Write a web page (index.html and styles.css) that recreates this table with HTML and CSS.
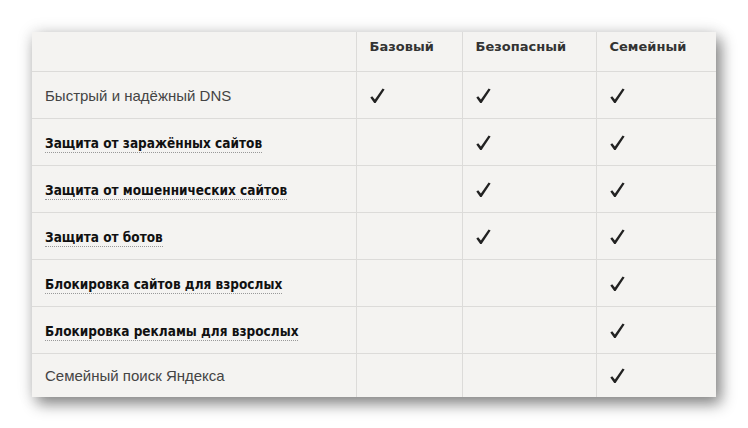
FILE: index.html
```html
<!DOCTYPE html>
<html lang="ru">
<head>
<meta charset="utf-8">
<link rel="stylesheet" href="styles.css">
</head>
<body>
<div class="page">
  <table class="plans">
    <colgroup>
      <col class="c-feature"><col class="c-base"><col class="c-safe"><col class="c-family">
    </colgroup>
    <thead>
      <tr>
        <th></th><th>Базовый</th><th>Безопасный</th><th>Семейный</th>
      </tr>
    </thead>
    <tbody>
      <tr>
        <td class="feature">Быстрый и надёжный DNS</td>
        <td><svg class="check" viewBox="0 0 15 15"><path d="M0.3 9.6 L2.2 8.2 L4.9 11.6 L12.6 0.4 L14.6 1.6 L5.6 15 L4.2 15 Z"/></svg></td>
        <td><svg class="check" viewBox="0 0 15 15"><path d="M0.3 9.6 L2.2 8.2 L4.9 11.6 L12.6 0.4 L14.6 1.6 L5.6 15 L4.2 15 Z"/></svg></td>
        <td><svg class="check" viewBox="0 0 15 15"><path d="M0.3 9.6 L2.2 8.2 L4.9 11.6 L12.6 0.4 L14.6 1.6 L5.6 15 L4.2 15 Z"/></svg></td>
      </tr>
      <tr>
        <td class="feature"><span class="term">Защита от заражённых сайтов</span></td>
        <td></td>
        <td><svg class="check" viewBox="0 0 15 15"><path d="M0.3 9.6 L2.2 8.2 L4.9 11.6 L12.6 0.4 L14.6 1.6 L5.6 15 L4.2 15 Z"/></svg></td>
        <td><svg class="check" viewBox="0 0 15 15"><path d="M0.3 9.6 L2.2 8.2 L4.9 11.6 L12.6 0.4 L14.6 1.6 L5.6 15 L4.2 15 Z"/></svg></td>
      </tr>
      <tr>
        <td class="feature"><span class="term">Защита от мошеннических сайтов</span></td>
        <td></td>
        <td><svg class="check" viewBox="0 0 15 15"><path d="M0.3 9.6 L2.2 8.2 L4.9 11.6 L12.6 0.4 L14.6 1.6 L5.6 15 L4.2 15 Z"/></svg></td>
        <td><svg class="check" viewBox="0 0 15 15"><path d="M0.3 9.6 L2.2 8.2 L4.9 11.6 L12.6 0.4 L14.6 1.6 L5.6 15 L4.2 15 Z"/></svg></td>
      </tr>
      <tr>
        <td class="feature"><span class="term">Защита от ботов</span></td>
        <td></td>
        <td><svg class="check" viewBox="0 0 15 15"><path d="M0.3 9.6 L2.2 8.2 L4.9 11.6 L12.6 0.4 L14.6 1.6 L5.6 15 L4.2 15 Z"/></svg></td>
        <td><svg class="check" viewBox="0 0 15 15"><path d="M0.3 9.6 L2.2 8.2 L4.9 11.6 L12.6 0.4 L14.6 1.6 L5.6 15 L4.2 15 Z"/></svg></td>
      </tr>
      <tr>
        <td class="feature"><span class="term">Блокировка сайтов для взрослых</span></td>
        <td></td>
        <td></td>
        <td><svg class="check" viewBox="0 0 15 15"><path d="M0.3 9.6 L2.2 8.2 L4.9 11.6 L12.6 0.4 L14.6 1.6 L5.6 15 L4.2 15 Z"/></svg></td>
      </tr>
      <tr>
        <td class="feature"><span class="term">Блокировка рекламы для взрослых</span></td>
        <td></td>
        <td></td>
        <td><svg class="check" viewBox="0 0 15 15"><path d="M0.3 9.6 L2.2 8.2 L4.9 11.6 L12.6 0.4 L14.6 1.6 L5.6 15 L4.2 15 Z"/></svg></td>
      </tr>
      <tr class="last">
        <td class="feature">Семейный поиск Яндекса</td>
        <td></td>
        <td></td>
        <td><svg class="check" viewBox="0 0 15 15"><path d="M0.3 9.6 L2.2 8.2 L4.9 11.6 L12.6 0.4 L14.6 1.6 L5.6 15 L4.2 15 Z"/></svg></td>
      </tr>
    </tbody>
  </table>
</div>
</body>
</html>
```

FILE: styles.css
```css
html, body {
  margin: 0;
  padding: 0;
  background: #ffffff;
}

.page {
  padding: 32px;
}

.plans {
  width: 684px;
  border-collapse: collapse;
  table-layout: fixed;
  background: #f4f3f1;
  box-shadow: 5px 7px 14px rgba(0, 0, 0, 0.45), 0 0 16px rgba(0, 0, 0, 0.12);
  font-family: "Liberation Sans", Arial, sans-serif;
  font-size: 15px;
  color: #444;
}

.c-feature { width: 324px; }
.c-base { width: 106px; }
.c-safe { width: 134px; }
.c-family { width: 120px; }

.plans th,
.plans td {
  padding: 0 0 0 13px;
  text-align: left;
  border-left: 1px solid #dcdbd9;
  border-bottom: 1px solid #dcdbd9;
}

.plans th:first-child,
.plans td:first-child {
  border-left: none;
}

.plans th {
  height: 32px;
  padding-top: 7px;
  vertical-align: top;
  font-family: "DejaVu Sans", Tahoma, sans-serif;
  font-weight: bold;
  font-size: 13px;
  line-height: 16px;
  color: #333;
}

.plans td {
  height: 46px;
  vertical-align: middle;
}

.plans tr.last td {
  height: 43px;
  border-bottom: none;
}

.term {
  font-family: "DejaVu Sans Condensed", "DejaVu Sans", Tahoma, sans-serif;
  font-weight: bold;
  font-size: 13.5px;
  color: #111;
  border-bottom: 1px dotted #999;
  padding-bottom: 1px;
}

.check {
  display: block;
  width: 15px;
  height: 15px;
  fill: #222;
}
```
